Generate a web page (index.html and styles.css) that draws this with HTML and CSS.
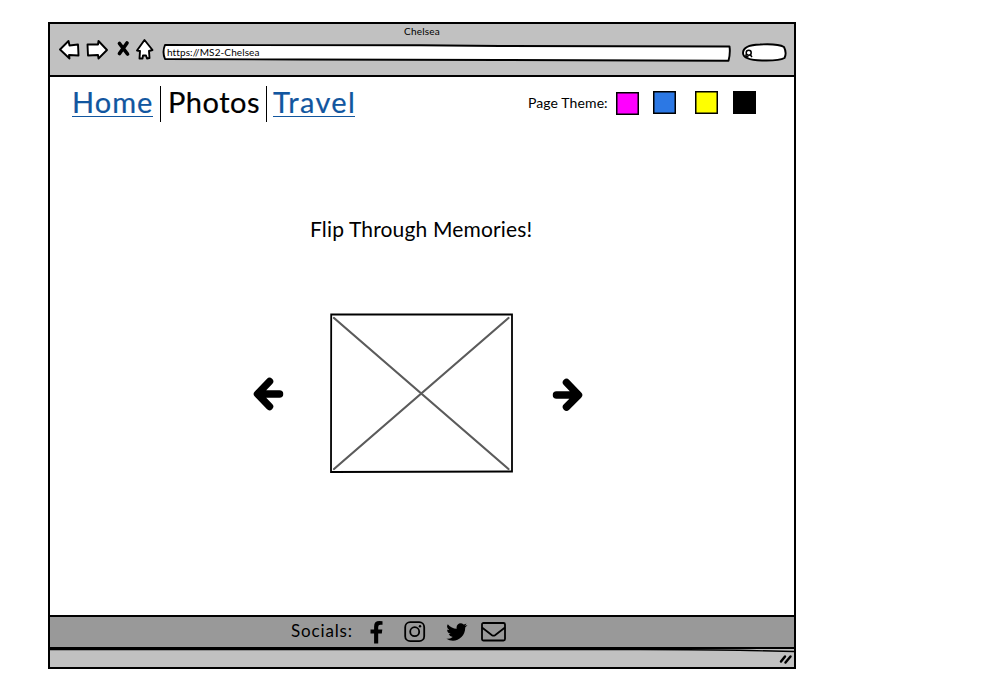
FILE: index.html
```html
<!DOCTYPE html>
<html lang="en">
<head>
<meta charset="utf-8">
<title>Chelsea</title>
<link rel="stylesheet" href="styles.css">
</head>
<body>
<div class="window">
  <header class="chrome">
    <div class="title">Chelsea</div>
    <div class="toolbar">
      <svg class="controls" width="96" height="24" viewBox="58 38 96 24">
        <g class="sketch">
          <path d="M60 49.5 68.5 41 69.5 45.5 78 44.5 78.5 55.5 69 55 69.5 58.5Z"/>
          <path d="M107 50 98.500 41 98 44.500 87.500 44.500 88 55.500 98 55 98.500 58.500Z"/>
          <path d="M144.500 40 137 50.500 140 51 139.500 58.500 142.500 58.500 143 55.500 146 55.500 147 58.500 149.500 58 149 51 152.500 50Z"/>
        </g>
        <path class="cross" d="M119.500 43.500 127.500 54M127 43 119.500 53.500"/>
      </svg>
      <div class="address">
        <svg class="shape" width="570" height="20" viewBox="162 43 570 20"><path class="outline" d="M165 45 L420 45.300 500 46 729.500 46.500 Q730.500 53 728.500 60.800 L500 60 300 59.500 165 59 Q162 52 165 45Z"/></svg>
        <span class="url">https://MS2-Chelsea</span>
      </div>
      <svg class="search" width="48" height="22" viewBox="741 42 48 22">
        <path class="outline" d="M743 53Q743 45 760 44.500Q778 43.500 784 47Q787 53 784.500 58Q779 61 762 60.500Q743 60 743 53Z"/>
        <circle class="lens" cx="748.700" cy="52.700" r="2.500"/><path class="lens" d="M750 54.500 752 57M745.500 54.500 746.500 56.500 748.500 57"/>
      </svg>
    </div>
  </header>
  <main class="page">
    <div class="top">
      <nav class="nav">
        <a class="link home" href="#">Home</a>
        <span class="photos">Photos</span>
        <a class="link travel" href="#">Travel</a>
      </nav>
      <div class="themes">
        <span class="label">Page Theme:</span>
        <i class="swatch pink"></i><i class="swatch blue"></i><i class="swatch yellow"></i><i class="swatch black"></i>
      </div>
    </div>
    <h1 class="heading"><span>Flip Through Memories!</span></h1>
    <div class="carousel">
      <svg class="arrow" width="32" height="36" viewBox="0 0 32 36"><path d="M17.500 6.500 5.500 19 17.500 31.500M8 19H27.500"/></svg>
      <svg class="photo" width="184" height="160" viewBox="0 0 184 160"><path class="frame" d="M1.200 1.500 182 1.500V158.500L1 159Z"/><path class="diagonal" d="M4 5 178.500 156M178.500 5 4 156"/></svg>
      <svg class="arrow" width="32" height="36" viewBox="0 0 32 36"><path d="M14.500 7.500 26.500 20 14.500 32M4.500 20H24"/></svg>
    </div>
  </main>
  <footer class="socials">
    <span class="label">Socials:</span>
    <svg width="13" height="23" viewBox="0 0 13 23"><path d="M12.500.3V3.800H10.500Q8.200 3.800 8.200 6V8.500H12.300L11.800 12.500H8.200V22.500H4.100V12.500H.5V8.500H4.100V5.400Q4.100.1 9.400.1Q11.400.1 12.500.3Z"/></svg>
    <svg class="instagram" width="22" height="22" viewBox="0 0 22 22"><rect x="1.200" y="1.200" width="19" height="19" rx="5"/><circle cx="10.700" cy="10.700" r="4.500"/><circle class="dot" cx="16" cy="5.300" r="1.200"/></svg>
    <svg width="22" height="18" viewBox="0 0 22 18"><path d="M21.500 2.100Q20.500 3.500 19.200 4.500C19.500 12 13.500 17.700 7 17.700Q3.400 17.700.4 15.800Q4 16.100 6.700 14Q3.800 13.800 2.700 11Q3.700 11.100 4.600 10.800Q1.300 10 1.100 6.400Q2.100 7 3.100 7Q-.2 4.500 1.800 1.200Q5.500 5.500 10.700 5.700C9.700 1.700 14.200-1.600 17.600 1.500Q19 1.200 20.400.4Q19.900 2 18.600 2.900Q20.100 2.700 21.500 2.100Z"/></svg>
    <svg class="mail" width="25" height="20" viewBox="0 0 25 20"><rect x="1" y="1" width="23" height="17.500" rx="1.500"/><path d="M1 5.500 11 13.200Q12.500 14.200 14 13.200L24 5.500"/></svg>
  </footer>
  <div class="status">
    <svg class="edge" width="744" height="6" viewBox="50 647 744 6"><path d="M50 649.500H640Q710 649.500 750 650.500L794 651.500"/></svg>
    <svg class="grip" width="14" height="11" viewBox="0 0 14 11"><path d="M2 7.500 6 2.500M6.500 8.500 11.500 2.500"/></svg>
  </div>
</div>
</body>
</html>
```
FILE: styles.css
```css
* { box-sizing: border-box; }
body { margin: 0; padding: 22px 0 0 48px; background: #fff; color: #000; font-family: Lato, "Open Sans", sans-serif; }
svg { display: block; flex: none; }
.window { width: 748px; height: 647px; border: 2px solid #000; display: flex; flex-direction: column; }
.chrome { height: 53px; border-bottom: 2px solid #000; background: #c1c1c1; }
.title { height: 14px; font-size: 10px; line-height: 14px; text-align: center; letter-spacing: .2px; }
.toolbar { display: flex; padding-left: 8px; }
.sketch path, .outline { fill: #fff; stroke: #000; stroke-width: 1.9; stroke-linejoin: round; }
.cross { fill: none; stroke: #000; stroke-width: 3.700; stroke-linecap: round; }
.address { position: relative; width: 570px; height: 20px; margin: 5px 9px 0 8px; padding-left: 5px; }
.shape { position: absolute; left: 0; top: 0; }
.url { position: relative; display: block; font-size: 10px; line-height: 18px; letter-spacing: .1px; }
.search { margin-top: 4px; }
.lens { fill: none; stroke: #000; stroke-width: 1.500; }
.page { flex: 1; }
.top { display: flex; height: 54px; padding: 9px 38px 0 22px; justify-content: space-between; }
.nav { display: flex; height: 36px; font-size: 29px; line-height: 32px; -webkit-text-stroke: .2px currentColor; }
.link { height: 31px; color: #11569f; text-decoration: none; border-bottom: 1px solid #11569f; white-space: nowrap; }
.home { width: 81px; letter-spacing: 1px; }
.travel { width: 82px; letter-spacing: 1.350px; }
.photos { width: 107px; margin: 0 6px 0 7px; padding-left: 7px; border: solid #000; border-width: 0 1px; letter-spacing: .5px; }
.themes { display: flex; height: 24px; margin-top: 5px; }
.themes .label { width: 88px; font-size: 14px; line-height: 24px; letter-spacing: .1px; white-space: nowrap; }
.swatch { width: 23px; height: 23px; border: 1px solid #000; box-shadow: inset 0 0 0 .5px #000; }
.pink { background: #f0f; margin-top: 1px; }
.blue { background: #2c78e4; margin-left: 14px; }
.yellow { background: #ff0; margin-left: 19px; }
.black { background: #000; margin-left: 15px; }
.heading { margin: 83px 0 0; padding-left: 260px; font-size: 21px; line-height: 29px; font-weight: 400; letter-spacing: .150px; }
.carousel { display: flex; align-items: center; padding: 70px 0 0 202px; }
.arrow { fill: none; stroke: #000; stroke-width: 7.500; stroke-linecap: round; stroke-linejoin: round; }
.photo { margin: 0 38px 0 46px; }
.frame { fill: #fff; stroke: #000; stroke-width: 1.800; }
.diagonal { fill: none; stroke: #5b5b5b; stroke-width: 2.200; stroke-linecap: round; }
.socials { display: flex; align-items: center; height: 34px; padding-left: 241px; border: solid #000; border-width: 2px 0; background: #999; }
.socials .label { width: 79px; margin-top: -2px; font-size: 17px; line-height: 28px; letter-spacing: .850px; }
.instagram, .mail { fill: none; stroke: #000; stroke-width: 1.800; }
.instagram { margin: 0 20px 0 21px; }
.instagram .dot { fill: #000; stroke: none; }
.mail { margin-left: 13px; }
.status { position: relative; height: 18px; background: #c1c1c1; }
.edge { position: absolute; left: 0; top: -2px; fill: none; stroke: #000; stroke-width: 1.300; }
.grip { position: absolute; right: 1px; bottom: 2px; fill: none; stroke: #000; stroke-width: 2.500; stroke-linecap: round; }
```
